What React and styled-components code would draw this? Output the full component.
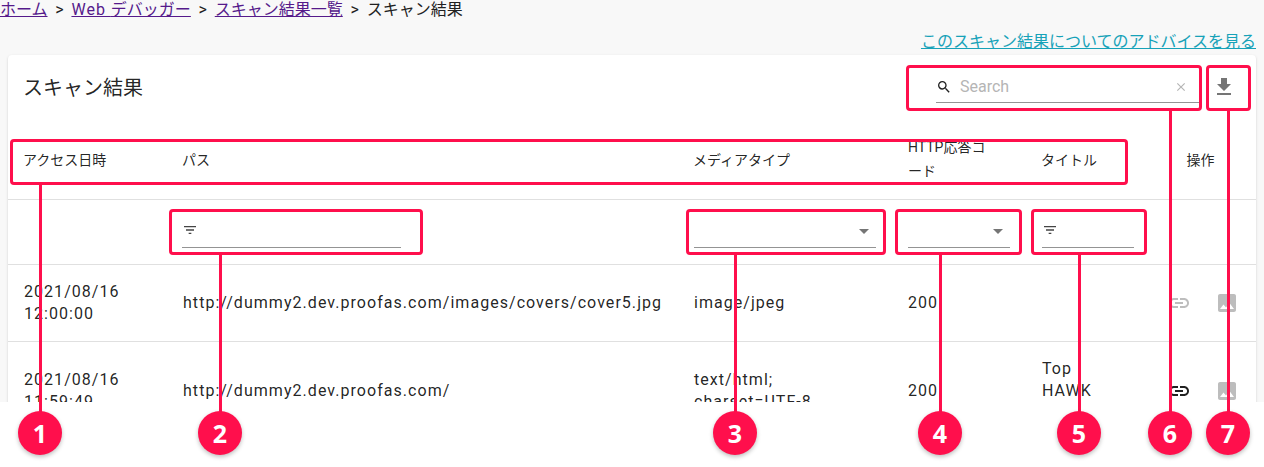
import styled, { createGlobalStyle } from 'styled-components';

const ACCENT = '#ff0f4c';
const TEXT = 'rgba(0, 0, 0, 0.87)';
const FONT = 'Roboto, "Noto Sans CJK JP", sans-serif';

const GlobalStyle = createGlobalStyle`
    html, body {
        margin: 0;
        padding: 0;
        background: #fff;
        font-family: ${FONT};
    }
`;

const Frame = styled.div`
    position: relative;
    width: 1264px;
    height: 467px;
    overflow: hidden;
    background: #fff;
`;

const Page = styled.div`
    height: 402px;
    overflow: hidden;
    background: #f8f8f8;
`;

const Breadcrumb = styled.nav`
    height: 20px;
    font-size: 16px;
    line-height: 20px;
    color: #212121;
    white-space: pre;
`;

const CrumbLink = styled.a`
    color: #551a8b;
    text-decoration: underline;
`;

const CrumbSeparator = styled.span`
    margin: 0 3.8px;
`;

const Latin = styled.span`
    letter-spacing: 1px;
`;

const AdviceRow = styled.div`
    display: flex;
    justify-content: flex-end;
    height: 35px;
    padding: 10px 8px 0 0;
    box-sizing: border-box;
    font-size: 16px;
    line-height: 24px;
`;

const AdviceLink = styled.a`
    color: #17a2b8;
    text-decoration: underline;
`;

const Card = styled.section`
    margin: 0 8px;
    background: #fff;
    border-radius: 4px;
    box-shadow: 0 2px 1px -1px rgba(0, 0, 0, 0.2), 0 1px 1px rgba(0, 0, 0, 0.14), 0 1px 3px rgba(0, 0, 0, 0.12);
`;

const Toolbar = styled.header`
    display: flex;
    align-items: center;
    height: 64px;
    padding: 0 20px 0 15px;
`;

const Title = styled.h2`
    flex: 1;
    margin: 0 0 2px;
    font-size: 20px;
    font-weight: 400;
    color: ${TEXT};
`;

const SearchField = styled.label`
    display: flex;
    align-items: center;
    box-sizing: border-box;
    width: 263px;
    height: 32px;
    margin-right: 13px;
    border-bottom: 1px solid #949494;
    color: #212121;
`;

const SearchInput = styled.input`
    flex: 1;
    min-width: 0;
    margin-left: 8px;
    padding: 0;
    border: 0;
    outline: 0;
    background: none;
    font: 16px ${FONT};

    &::placeholder {
        color: #b5b5b5;
        opacity: 1;
    }
`;

const ClearSlot = styled.span`
    display: flex;
    margin-right: 11px;
`;

const Table = styled.table`
    width: 1248px;
    table-layout: fixed;
    border-collapse: collapse;
    font-size: 14px;
    color: ${TEXT};
`;

const HeadCell = styled.th`
    padding: 16px;
    padding-top: ${props => props.$single ? 18 : 16}px;
    padding-left: ${props => props.$single ? 15 : 16}px;
    padding-right: ${props => props.$center ? 20 : 16}px;
    border-bottom: 1px solid #e0e0e0;
    font-weight: 400;
    line-height: 24px;
    text-align: ${props => props.$center ? 'center' : 'left'};
`;

const FilterCell = styled.td`
    height: 32px;
    padding: 16px;
    border-bottom: 1px solid #e0e0e0;
`;

const BodyCell = styled.td`
    padding: 16px;
    border-bottom: 1px solid #e0e0e0;
    font-size: 16px;
    line-height: 22px;
    letter-spacing: 1.04px;
    vertical-align: middle;
    white-space: nowrap;
`;

const FilterField = styled.div`
    display: flex;
    align-items: flex-start;
    justify-content: ${props => props.$select ? 'flex-end' : 'flex-start'};
    box-sizing: border-box;
    width: ${props => props.$width || '100%'};
    height: 32px;
    margin-left: ${props => props.$shift || 0}px;
    padding-top: ${props => props.$select ? 3 : 6}px;
    border-bottom: 1px solid #949494;
    color: #444;
`;

const Actions = styled.div`
    display: flex;
    justify-content: center;
    margin: 0 -11px;
`;

const ActionSlot = styled.span`
    display: flex;
    justify-content: center;
    width: 48px;
    color: ${props => props.$color};
`;

const Marker = styled.div`
    position: absolute;
    left: ${props => props.$x}px;
    top: ${props => props.$y}px;
    width: ${props => props.$w}px;
    height: ${props => props.$h}px;
    box-sizing: border-box;
    border: 3px solid ${ACCENT};
    border-radius: 4px;
`;

const Leader = styled.div`
    position: absolute;
    left: ${props => props.$x - 1.5}px;
    top: ${props => props.$from}px;
    width: 3px;
    height: ${props => 415 - props.$from}px;
    background: ${ACCENT};
`;

const Badge = styled.div`
    position: absolute;
    left: ${props => props.$x - 22}px;
    top: 411px;
    display: flex;
    align-items: center;
    justify-content: center;
    width: 44px;
    height: 44px;
    border-radius: 50%;
    background: ${ACCENT};
    box-shadow: 0 2px 4px rgba(0, 0, 0, 0.25);
    color: #fff;
    font: 700 25px "Open Sans", sans-serif;
`;

const Icon = ({ d, size = 24, color = 'currentColor' }) => (
    <svg width={size} height={size} viewBox="0 0 24 24" fill={color} aria-hidden="true">
        <path d={d} />
    </svg>
);

const paths = {
    search: 'M15.5 14h-.79l-.28-.27A6.47 6.47 0 0 0 16 9.5 6.5 6.5 0 1 0 9.5 16c1.61 0 3.09-.59 4.23-1.57l.27.28v.79l5 4.99L20.49 19l-4.99-5zm-6 0C7.01 14 5 11.99 5 9.5S7.01 5 9.5 5 14 7.01 14 9.5 11.99 14 9.5 14z',
    clear: 'M19 6.41L17.59 5 12 10.59 6.41 5 5 6.41 10.59 12 5 17.59 6.41 19 12 13.41 17.59 19 19 17.59 13.41 12z',
    download: 'M19 9h-4V3H9v6H5l7 7 7-7zM5 18v2h14v-2H5z',
    filter: 'M10 18h4v-2h-4v2zM3 6v2h18V6H3zm3 7h12v-2H6v2z',
    arrow: 'M7 10l5 5 5-5z',
    link: 'M3.9 12c0-1.71 1.39-3.1 3.1-3.1h4V7H7c-2.76 0-5 2.24-5 5s2.24 5 5 5h4v-1.9H7c-1.71 0-3.1-1.39-3.1-3.1zM8 13h8v-2H8v2zm9-6h-4v1.9h4c1.71 0 3.1 1.39 3.1 3.1s-1.39 3.1-3.1 3.1h-4V17h4c2.76 0 5-2.24 5-5s-2.24-5-5-5z',
    image: 'M21 19V5c0-1.1-.9-2-2-2H5c-1.1 0-2 .9-2 2v14c0 1.1.9 2 2 2h14c1.1 0 2-.9 2-2zM8.5 13.5l2.5 3.01L14.5 12l4.5 6H5l3.5-4.5z',
};

const columns = [159, 511, 214, 134, 124, 106];

const rows = [
    {
        date: ['2021/08/16', '12:00:00'],
        path: 'http://dummy2.dev.proofas.com/images/covers/cover5.jpg',
        media: ['image/jpeg'],
        code: '200',
        title: [],
        linkColor: '#bdbdbd',
    },
    {
        date: ['2021/08/16', '11:59:49'],
        path: 'http://dummy2.dev.proofas.com/',
        media: ['text/html;', 'charset=UTF-8'],
        code: '200',
        title: ['Top', 'HAWK', '\u00a0'],
        linkColor: '#212121',
    },
];

const markers = [
    { x: 10, y: 139, w: 1118, h: 46 },
    { x: 169, y: 209, w: 254, h: 46 },
    { x: 686, y: 209, w: 200, h: 46 },
    { x: 895, y: 209, w: 127, h: 46 },
    { x: 1031, y: 209, w: 116, h: 46 },
    { x: 906, y: 65, w: 296, h: 46 },
    { x: 1206, y: 65, w: 45, h: 46 },
];

const badges = [
    { n: 1, x: 40, from: 185 },
    { n: 2, x: 220, from: 255 },
    { n: 3, x: 735, from: 255 },
    { n: 4, x: 940, from: 255 },
    { n: 5, x: 1079, from: 255 },
    { n: 6, x: 1170, from: 111 },
    { n: 7, x: 1228, from: 111 },
];

const Lines = ({ items }) => items.map((line, i) => (
    <span key={line}>{i > 0 && <br />}{line}</span>
));

export default function App() {
    return (
        <Frame>
            <GlobalStyle />
            <Page>
                <Breadcrumb>
                    <CrumbLink href="#">ホーム</CrumbLink>
                    <CrumbSeparator>{' > '}</CrumbSeparator>
                    <CrumbLink href="#"><Latin>Web </Latin>デバッガー</CrumbLink>
                    <CrumbSeparator>{' > '}</CrumbSeparator>
                    <CrumbLink href="#">スキャン結果一覧</CrumbLink>
                    <CrumbSeparator>{' > '}</CrumbSeparator>
                    スキャン結果
                </Breadcrumb>
                <AdviceRow>
                    <AdviceLink href="#">このスキャン結果についてのアドバイスを見る</AdviceLink>
                </AdviceRow>
                <Card>
                    <Toolbar>
                        <Title>スキャン結果</Title>
                        <SearchField>
                            <Icon d={paths.search} size={16} />
                            <SearchInput placeholder="Search" />
                            <ClearSlot><Icon d={paths.clear} size={14} color="#b5b5b5" /></ClearSlot>
                        </SearchField>
                        <Icon d={paths.download} color="#757575" />
                    </Toolbar>
                    <Table>
                        <colgroup>
                            {columns.map((w, i) => <col key={i} width={w} />)}
                        </colgroup>
                        <thead>
                            <tr>
                                <HeadCell $single>アクセス日時</HeadCell>
                                <HeadCell $single>パス</HeadCell>
                                <HeadCell $single>メディアタイプ</HeadCell>
                                <HeadCell>HTTP応答コ<br />ード</HeadCell>
                                <HeadCell $single>タイトル</HeadCell>
                                <HeadCell $single $center>操作</HeadCell>
                            </tr>
                            <tr>
                                <FilterCell />
                                <FilterCell>
                                    <FilterField $width="219px" $shift={-1}>
                                        <Icon d={paths.filter} size={16} />
                                    </FilterField>
                                </FilterCell>
                                <FilterCell>
                                    <FilterField $select>
                                        <Icon d={paths.arrow} color="#757575" />
                                    </FilterField>
                                </FilterCell>
                                <FilterCell>
                                    <FilterField $select>
                                        <Icon d={paths.arrow} color="#757575" />
                                    </FilterField>
                                </FilterCell>
                                <FilterCell>
                                    <FilterField>
                                        <Icon d={paths.filter} size={16} />
                                    </FilterField>
                                </FilterCell>
                                <FilterCell />
                            </tr>
                        </thead>
                        <tbody>
                            {rows.map(row => (
                                <tr key={row.path}>
                                    <BodyCell><Lines items={row.date} /></BodyCell>
                                    <BodyCell>{row.path}</BodyCell>
                                    <BodyCell><Lines items={row.media} /></BodyCell>
                                    <BodyCell>{row.code}</BodyCell>
                                    <BodyCell><Lines items={row.title} /></BodyCell>
                                    <BodyCell>
                                        <Actions>
                                            <ActionSlot $color={row.linkColor}><Icon d={paths.link} /></ActionSlot>
                                            <ActionSlot $color="#bdbdbd"><Icon d={paths.image} /></ActionSlot>
                                        </Actions>
                                    </BodyCell>
                                </tr>
                            ))}
                        </tbody>
                    </Table>
                </Card>
            </Page>
            {markers.map(m => (
                <Marker key={m.x} $x={m.x} $y={m.y} $w={m.w} $h={m.h} />
            ))}
            {badges.map(b => <Leader key={b.n} $x={b.x} $from={b.from} />)}
            {badges.map(b => <Badge key={b.n} $x={b.x}>{b.n}</Badge>)}
        </Frame>
    );
}
